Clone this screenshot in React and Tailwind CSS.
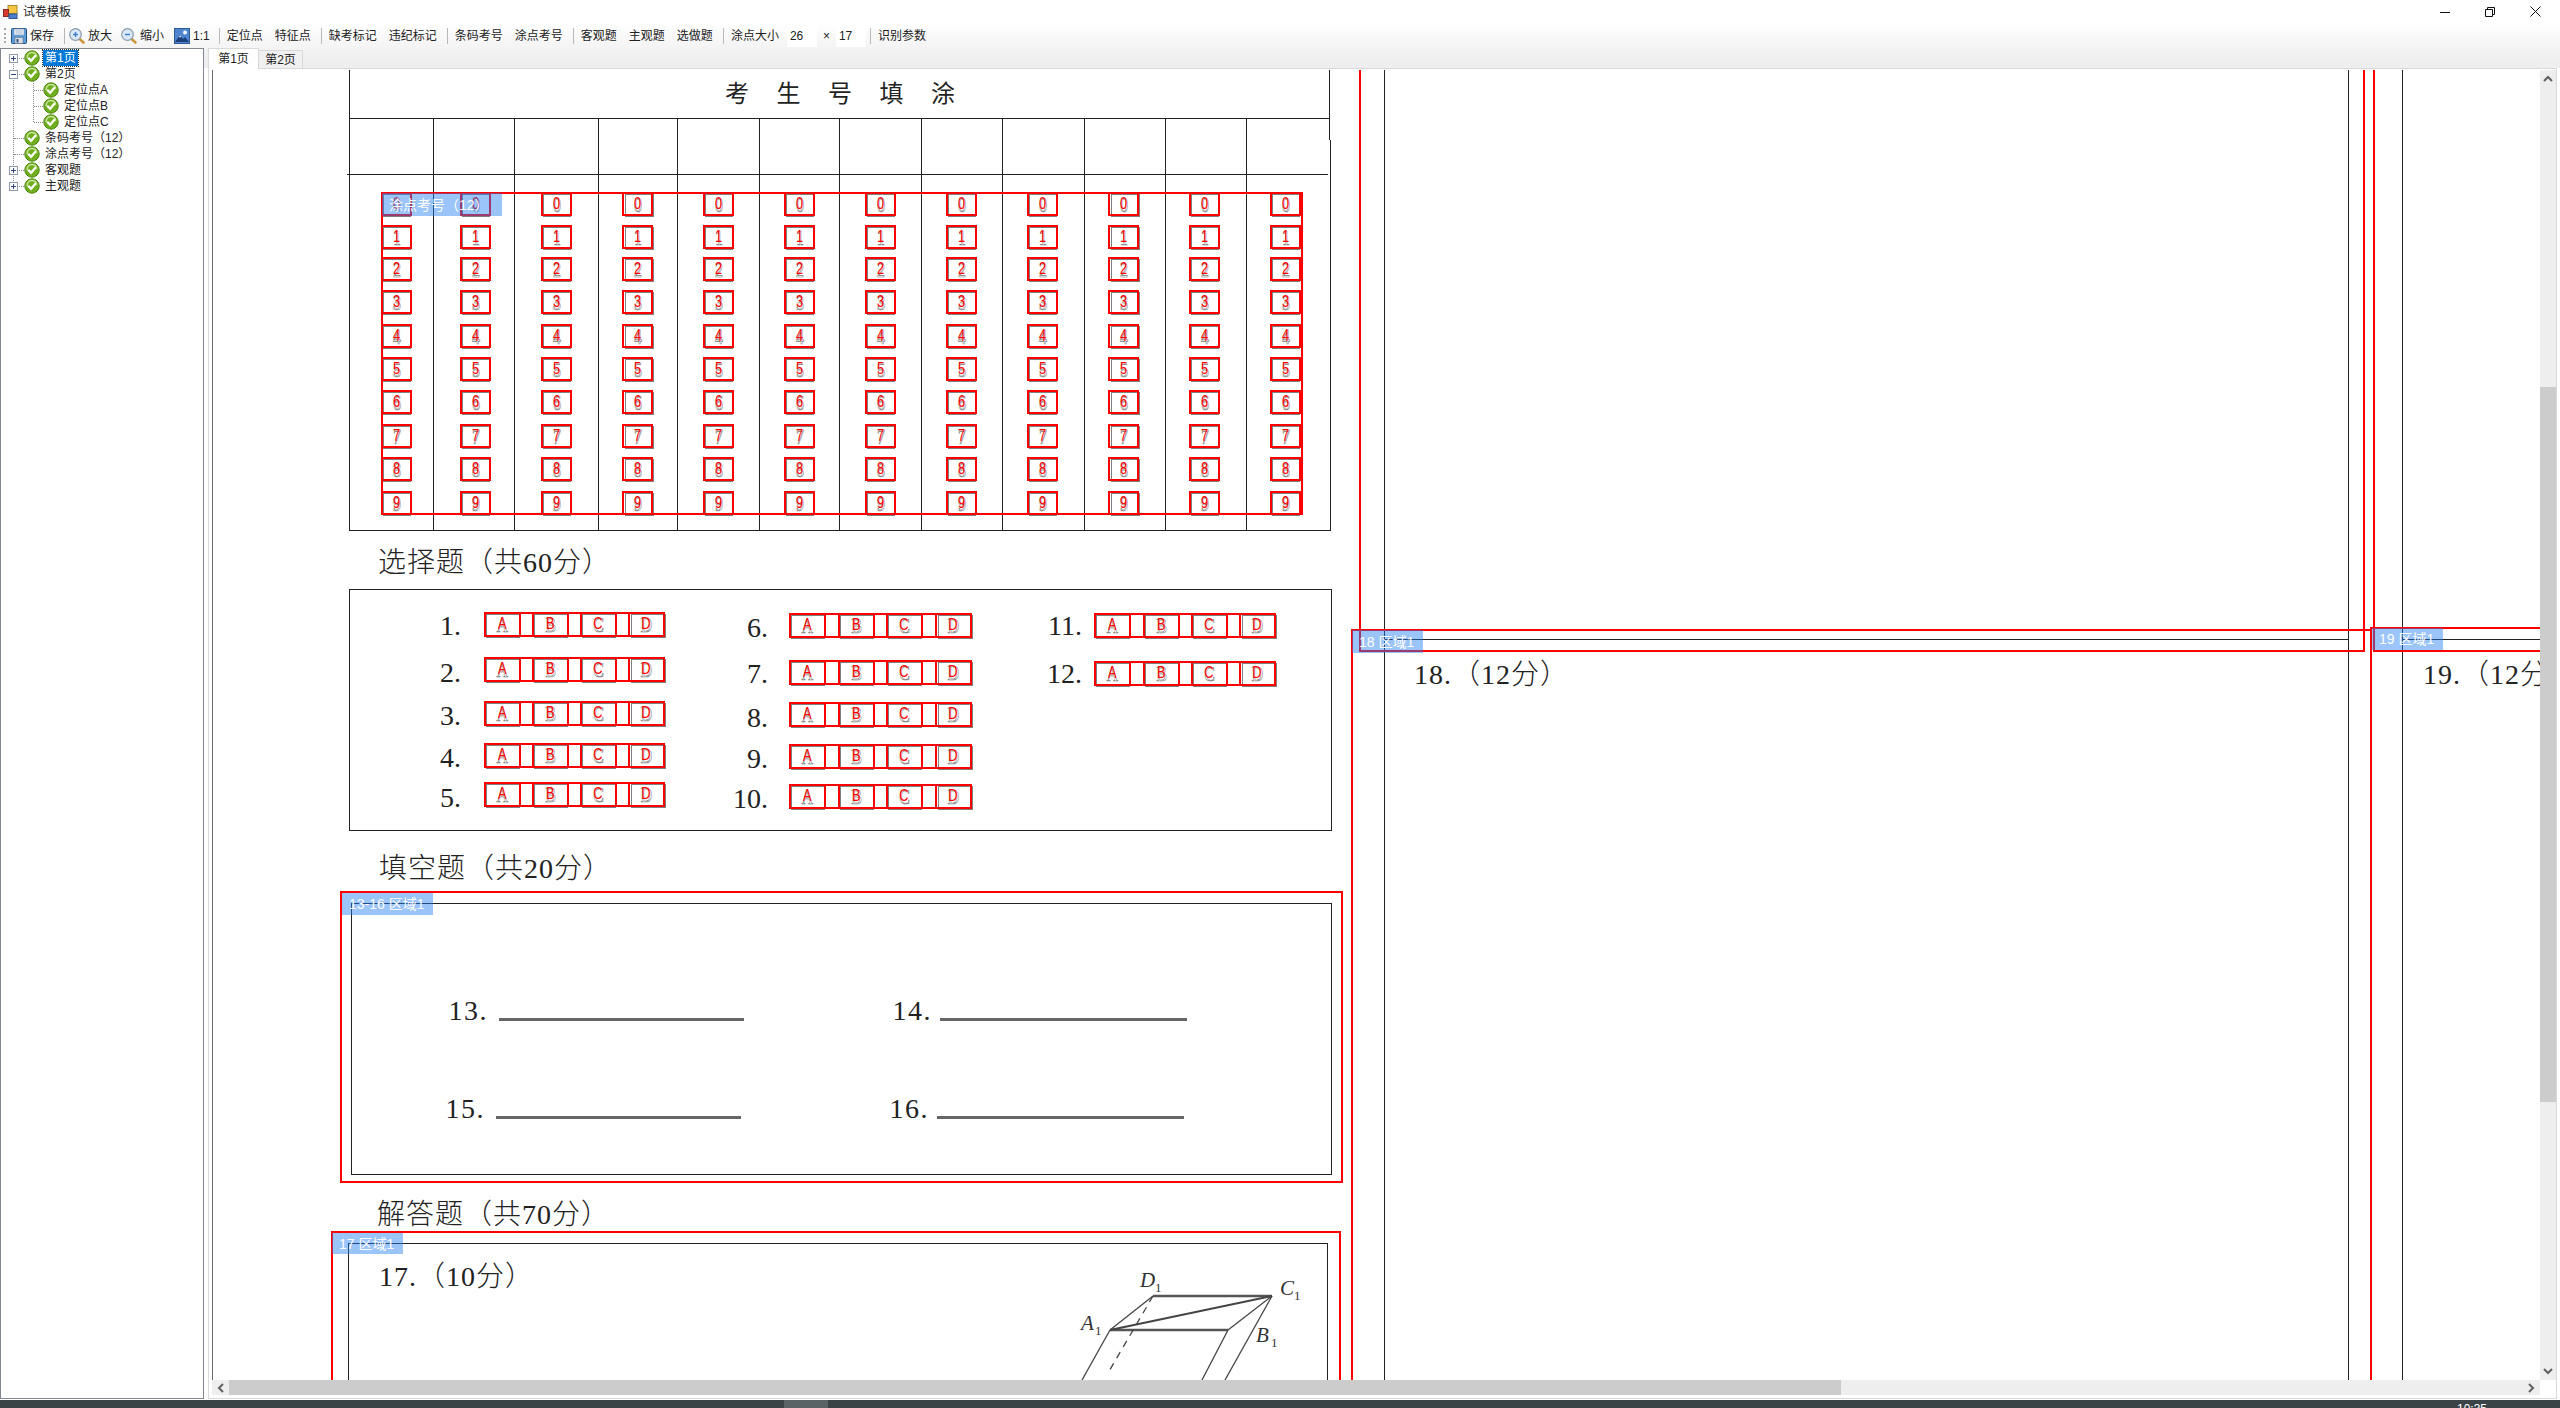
import React from 'react';

// page coords -> canvas coords
const OX = 213;
const OY = 70;

const pos = (x, y, w, h) => ({ left: x - OX, top: y - OY, width: w, height: h });

const Ln = ({ x, y, w = 1, h = 1 }) => (
  <div className="absolute bg-[#222222]" style={pos(x, y, w, h)} />
);
const RedLn = ({ x, y, w = 2, h = 2 }) => (
  <div className="absolute bg-[#ff0000]" style={pos(x, y, w, h)} />
);
const RedRect = ({ x, y, w, h }) => (
  <div className="absolute border-2 border-[#ff0000]" style={pos(x, y, w, h)} />
);
const Rect = ({ x, y, w, h }) => (
  <div className="absolute border border-[#222222]" style={pos(x, y, w, h)} />
);

const SERIF = "font-['Liberation_Serif','Noto_Sans_CJK_SC',serif]";

const Txt = ({ x, y, children }) => (
  <div
    className={`absolute whitespace-nowrap text-[28px] leading-none font-light tracking-[1px] text-[#222222] ${SERIF}`}
    style={{ left: x - OX, top: y - OY }}
  >
    {children}
  </div>
);

const Num = ({ right, base, wide, children }) => (
  <div
    className={`absolute whitespace-nowrap text-right text-[28px] leading-none text-[#222222] ${wide ? 'tracking-[1.5px]' : ''} ${SERIF}`}
    style={{ left: right - 60 - OX, top: base - 23 - OY, width: 60 }}
  >
    {children}
  </div>
);

const Label = ({ x, y, w, h, children }) => (
  <div
    className="absolute z-10 flex items-center whitespace-nowrap bg-[rgba(37,126,243,0.46)] pl-[7px] text-[14px] leading-none text-white font-['Liberation_Sans','Noto_Sans_CJK_SC',sans-serif]"
    style={pos(x, y, w, h)}
  >
    {children}
  </div>
);

// a printed bubble: grey scan outline + glyph, red template box + glyph on top
const Bubble = ({ x, y, w, h, ch, off = 0 }) => (
  <div className="absolute" style={pos(x, y, w, h)}>
    <div
      className="absolute border border-[#808080]"
      style={{ left: 2 + off, top: 2, right: off ? -1 : 1, bottom: -1 }}
    />
    <div className="absolute inset-0 border-2 border-[#ff0000]" />
    <div className="absolute inset-0 flex items-center justify-center pt-[1px] font-['Liberation_Serif',serif] text-[20px] leading-none text-transparent [-webkit-text-stroke:0.6px_#777777]">
      <span className="scale-x-[0.8]">{ch}</span>
    </div>
    <div className="absolute inset-0 flex items-center justify-center pr-[1px] pb-[1px] font-['Liberation_Sans',sans-serif] text-[16px] leading-none text-[#ff0000]">
      <span className="scale-x-[0.8]">{ch}</span>
    </div>
  </div>
);

const COLS = [381, 460, 541, 622, 703, 784, 865, 946, 1027, 1108, 1189, 1270];
const ROWS = [192, 225, 257, 290, 324, 357, 390, 424, 457, 491];
const V_LINES = [433, 514, 598, 677, 759, 839, 921, 1002, 1084, 1165, 1246];

const ChoiceRow = ({ xs, y }) => (
  <>
    <RedRect x={xs[0]} y={y} w={xs[3] + 37 - xs[0]} h={25} />
    {xs.map((x, i) => (
      <Bubble key={i} x={x} y={y} w={37} h={25} ch={'ABCD'[i]} off={i === 3 ? 1 : 0} />
    ))}
  </>
);

const CHOICE1 = [484, 532, 580, 628];
const CHOICE2 = [789, 838, 886, 935];
const CHOICE3 = [1094, 1143, 1191, 1239];

const Sheet = () => (
  <>
    {/* 考生号填涂 */}
    <Ln x={349} y={70} h={460} />
    <Ln x={1329} y={70} h={70} />
    <Ln x={1330} y={140} h={390} />
    <Ln x={349} y={118} w={981} />
    <Ln x={347} y={174} w={981} />
    <Ln x={349} y={530} w={982} />
    {V_LINES.map((x) => (
      <Ln key={x} x={x} y={118} h={412} />
    ))}
    <div
      className="absolute whitespace-nowrap text-[24px] leading-none tracking-[27.5px] text-[#222222] font-['Noto_Sans_CJK_SC',sans-serif]"
      style={{ left: 725 - OX, top: 80 - OY }}
    >
      考生号填涂
    </div>

    {COLS.map((x, c) =>
      ROWS.map((y, r) => <Bubble key={c + '-' + r} x={x} y={y} w={31} h={24} ch={String(r)} off={c === 3 || c === 9 ? 1 : 0} />)
    )}
    <RedRect x={381} y={192} w={922} h={323} />
    <Label x={382} y={193} w={120} h={23}>涂点考号（12）</Label>

    {/* 选择题 */}
    <Txt x={378} y={549}>选择题（共60分）</Txt>
    <Rect x={349} y={589} w={983} h={242} />
    {[612, 657, 701, 743, 782].map((y) => <ChoiceRow key={y} xs={CHOICE1} y={y} />)}
    {[613, 660, 702, 744, 784].map((y) => <ChoiceRow key={y} xs={CHOICE2} y={y} />)}
    {[613, 661].map((y) => <ChoiceRow key={y} xs={CHOICE3} y={y} />)}
    {[635, 682, 725, 767, 807].map((b, i) => <Num key={b} right={461} base={b}>{i + 1}.</Num>)}
    {[637, 683, 727, 768, 808].map((b, i) => <Num key={b} right={768} base={b}>{i + 6}.</Num>)}
    <Num right={1082} base={635}>11.</Num>
    <Num right={1082} base={683}>12.</Num>

    {/* 填空题 */}
    <Txt x={379} y={855}>填空题（共20分）</Txt>
    <RedRect x={340} y={891} w={1003} h={292} />
    <Rect x={351} y={903} w={981} h={272} />
    <Label x={342} y={893} w={91} h={22}>13-16 区域1</Label>
    <Num wide right={488} base={1020}>13.</Num>
    <Num wide right={485} base={1118}>15.</Num>
    <Num wide right={932} base={1020}>14.</Num>
    <Num wide right={929} base={1118}>16.</Num>
    <div className="absolute bg-[#666666]" style={pos(499, 1018, 245, 3)} />
    <div className="absolute bg-[#666666]" style={pos(940, 1018, 247, 3)} />
    <div className="absolute bg-[#666666]" style={pos(496, 1116, 245, 3)} />
    <div className="absolute bg-[#666666]" style={pos(937, 1116, 247, 3)} />

    {/* 解答题 17 */}
    <Txt x={377} y={1201}>解答题（共70分）</Txt>
    <RedLn x={331} y={1231} w={1009} />
    <RedLn x={331} y={1231} h={150} />
    <RedLn x={1339} y={1231} h={150} />
    <Ln x={348} y={1243} w={979} />
    <Ln x={348} y={1243} h={137} />
    <Ln x={1327} y={1243} h={137} />
    <Label x={332} y={1233} w={71} h={21}>17 区域1</Label>
    <Txt x={379} y={1263}>17.（10分）</Txt>
    <svg className="absolute" style={pos(1060, 1260, 260, 120)} viewBox="1060 1260 260 120">
      <g stroke="#444444" fill="none" strokeWidth="1.3">
        <path d="M1153 1296H1272" strokeWidth="2.4" stroke="#555555" />
        <path d="M1110 1330H1228" strokeWidth="2.4" stroke="#555555" />
        <path d="M1110 1330L1272 1296" strokeWidth="2" />
        <path d="M1110 1330L1153 1296" />
        <path d="M1228 1330L1272 1296" />
        <path d="M1110 1330L1082 1380" />
        <path d="M1228 1330L1202 1380" />
        <path d="M1272 1296L1225 1380" />
        <path d="M1153 1296L1108 1373" strokeDasharray="7 6" />
      </g>
      <g fill="#333333" fontFamily="Liberation Serif" fontSize="21" fontStyle="italic">
        <text x="1140" y="1287">D</text>
        <text x="1280" y="1295">C</text>
        <text x="1081" y="1330">A</text>
        <text x="1256" y="1342">B</text>
      </g>
      <g fill="#333333" fontFamily="Liberation Serif" fontSize="13">
        <text x="1155" y="1292">1</text>
        <text x="1294" y="1300">1</text>
        <text x="1095" y="1335">1</text>
        <text x="1271" y="1347">1</text>
      </g>
    </svg>

    {/* 右边两栏 */}
    <Ln x={1384} y={70} h={1310} />
    <Ln x={2348} y={70} h={1310} />
    <Ln x={2402} y={70} h={1310} />
    <Ln x={1384} y={639} w={964} />
    <Ln x={2402} y={639} w={140} />
    <RedLn x={1359} y={70} h={582} />
    <RedLn x={1359} y={650} w={1006} />
    <RedLn x={2363} y={70} h={582} />
    <RedLn x={1351} y={629} w={1021} />
    <RedLn x={1351} y={629} h={751} />
    <RedLn x={2370} y={627} w={172} />
    <RedLn x={2370} y={627} h={753} />
    <RedLn x={2373} y={70} h={582} />
    <RedLn x={2373} y={650} w={169} />
    <Label x={1352} y={630} w={71} h={23}>18 区域1</Label>
    <Label x={2372} y={628} w={71} h={22}>19 区域1</Label>
    <Txt x={1414} y={661}>18.（12分）</Txt>
    <Txt x={2423} y={661}>19.（12分）</Txt>
  </>
);

const CheckIcon = () => (
  <svg width="16" height="16" viewBox="0 0 16 16" className="shrink-0">
    <circle cx="8" cy="8" r="7.2" fill="#6fae1c" stroke="#4a860c" />
    <path d="M3.2 8A4.8 4.8 0 0 1 12.8 6.6" fill="none" stroke="#c8e69a" strokeWidth="1.4" />
    <path d="M4.2 7.8l2.9 3 4.8-5.6" fill="none" stroke="#ffffff" strokeWidth="2.3" />
  </svg>
);

const Expander = ({ open, y }) => (
  <div
    className="absolute z-10 flex h-[9px] w-[9px] items-center justify-center border border-[#8f9aa8] bg-white"
    style={{ left: 8, top: y }}
  >
    <div className="absolute h-px w-[5px] bg-[#2f4a7a]" />
    {!open && <div className="absolute h-[5px] w-px bg-[#2f4a7a]" />}
  </div>
);

const TreeRow = ({ level = 0, selected, children }) => (
  <div className={`flex h-4 items-center ${level ? 'pl-[42px]' : 'pl-[23px]'}`}>
    <div className="flex w-[19px] items-center">
      <CheckIcon />
    </div>
    <span
      className={`whitespace-nowrap px-[2px] text-[12px] leading-4 ${
        selected ? 'bg-[#0078d7] text-white outline-1 outline-dotted outline-[#333333]' : 'text-[#222222]'
      }`}
    >
      {children}
    </span>
  </div>
);

const Tree = () => (
  <div className="relative h-full w-[204px] shrink-0 border border-[#828790] bg-white pt-[1px] font-['Liberation_Sans','Noto_Sans_CJK_SC',sans-serif]">
    {/* dotted guides */}
    <div className="absolute left-[12px] top-[9px] h-[129px] border-l border-dotted border-[#888888]" />
    <div className="absolute left-[32px] top-[32px] h-[41px] border-l border-dotted border-[#888888]" />
    {[9, 25, 89, 105, 121, 137].map((y) => (
      <div key={y} className="absolute left-[13px] w-[12px] border-t border-dotted border-[#888888]" style={{ top: y }} />
    ))}
    {[41, 57, 73].map((y) => (
      <div key={y} className="absolute left-[33px] w-[11px] border-t border-dotted border-[#888888]" style={{ top: y }} />
    ))}
    <Expander y={5} />
    <Expander y={21} open />
    <Expander y={117} />
    <Expander y={133} />
    <TreeRow selected>第1页</TreeRow>
    <TreeRow>第2页</TreeRow>
    <TreeRow level={1}>定位点A</TreeRow>
    <TreeRow level={1}>定位点B</TreeRow>
    <TreeRow level={1}>定位点C</TreeRow>
    <TreeRow>条码考号（12）</TreeRow>
    <TreeRow>涂点考号（12）</TreeRow>
    <TreeRow>客观题</TreeRow>
    <TreeRow>主观题</TreeRow>
  </div>
);

const Sep = () => <div className="ml-[4px] mr-[1px] h-[16px] w-px bg-[#b8b8b8]" />;
const Btn = ({ children }) => <div className="whitespace-nowrap px-[6px]">{children}</div>;

const SaveIcon = () => (
  <svg width="16" height="16" viewBox="0 0 16 16">
    <rect x="0.5" y="0.5" width="15" height="15" rx="1" fill="#5b9bd8" stroke="#23507f" />
    <rect x="3" y="1" width="10" height="6" fill="#eef4fa" stroke="#7d98b4" strokeWidth="0.6" />
    <path d="M4.5 3h7M4.5 5h7" stroke="#9fb4c8" />
    <rect x="4" y="9.5" width="8" height="6" fill="#d8dee4" stroke="#5f7387" strokeWidth="0.6" />
    <rect x="5.5" y="11" width="2" height="3.5" fill="#30567c" />
  </svg>
);

const ZoomIcon = ({ plus }) => (
  <svg width="16" height="16" viewBox="0 0 16 16">
    <path d="M10 10.5l4.5 4" stroke="#c9973a" strokeWidth="2.6" strokeLinecap="round" />
    <circle cx="6.5" cy="6.5" r="5.8" fill="#d9e8f6" stroke="#8a9bab" strokeWidth="1.2" />
    <path d="M4 6.5h5" stroke="#3d7cc4" strokeWidth="1.4" />
    {plus && <path d="M6.5 4v5" stroke="#3d7cc4" strokeWidth="1.4" />}
  </svg>
);

const PictureIcon = () => (
  <svg width="16" height="16" viewBox="0 0 16 16">
    <rect x="0.5" y="0.5" width="15" height="15" fill="#4f86cf" stroke="#2e5a94" />
    <circle cx="11" cy="4.5" r="2" fill="#f3f6fb" />
    <path d="M1 14l5-7 3 4 2-2 4 5z" fill="#1c3f7a" />
    <path d="M6 7l1.4 2-2.4.6z" fill="#e8eef8" />
  </svg>
);

const Toolbar = () => (
  <div className="flex h-[25px] items-center text-[12px] text-[#222222] font-['Liberation_Sans','Noto_Sans_CJK_SC',sans-serif]">
    <div className="ml-[4px] mr-[5px] h-[15px] border-l-2 border-dotted border-[#aaaaaa]" />
    <div className="flex items-center gap-[3px]"><SaveIcon /><span>保存</span></div>
    <div className="ml-[10px] mr-[4px] h-[16px] w-px bg-[#b8b8b8]" />
    <div className="flex items-center gap-[3px]"><ZoomIcon plus /><span>放大</span></div>
    <div className="ml-[9px] flex items-center gap-[3px]"><ZoomIcon /><span>缩小</span></div>
    <div className="ml-[10px] flex items-center gap-[3px]"><PictureIcon /><span>1:1</span></div>
    <div className="ml-[9px] mr-[1px] h-[16px] w-px bg-[#b8b8b8]" />
    <Btn>定位点</Btn>
    <Btn>特征点</Btn>
    <Sep />
    <Btn>缺考标记</Btn>
    <Btn>违纪标记</Btn>
    <Sep />
    <Btn>条码考号</Btn>
    <Btn>涂点考号</Btn>
    <Sep />
    <Btn>客观题</Btn>
    <Btn>主观题</Btn>
    <Btn>选做题</Btn>
    <Sep />
    <Btn>涂点大小</Btn>
    <div className="ml-[2px] flex h-[23px] w-[30px] items-center bg-white pl-[3px]">26</div>
    <div className="mx-[5px] w-[9px] text-center">×</div>
    <div className="flex h-[23px] w-[30px] items-center bg-white pl-[3px]">17</div>
    <Sep />
    <Btn>识别参数</Btn>
  </div>
);

const Arrow = ({ d, className = '' }) => (
  <svg width="10" height="10" viewBox="0 0 10 10" className={className}>
    <path d={d} fill="none" stroke="#606060" strokeWidth="2" />
  </svg>
);

export default function App() {
  return (
    <div className="flex h-[1408px] w-[2560px] flex-col overflow-hidden bg-white [text-spacing-trim:space-all] font-['Liberation_Sans','Noto_Sans_CJK_SC',sans-serif]">
      {/* title bar */}
      <div className="relative flex h-[23px] shrink-0 items-center bg-white pl-[3px]">
        <svg width="15" height="14" viewBox="0 0 15 14">
          <rect x="5" y="0.5" width="9" height="8" fill="#f5c542" stroke="#a88a2a" />
          <rect x="0.5" y="4.5" width="5" height="7" fill="#d9382e" stroke="#8a2a24" />
          <rect x="6" y="9" width="8" height="4.5" fill="#4a7fd0" stroke="#34588f" />
        </svg>
        <span className="ml-[5px] text-[12px] text-[#222222]">试卷模板</span>
        <div className="ml-auto mr-[19px] flex items-center gap-[35px]">
          <svg width="10" height="10" viewBox="0 0 10 10"><path d="M0 5.5h10" stroke="#111111" /></svg>
          <svg width="10" height="10" viewBox="0 0 10 10" className="mx-[0px]">
            <path d="M.5 2.5h7v7h-7zM2.5 2.5v-2h7v7h-2" fill="none" stroke="#111111" />
          </svg>
          <svg width="11" height="11" viewBox="0 0 11 11"><path d="M.5.5l10 10M10.5.5l-10 10" stroke="#111111" /></svg>
        </div>
      </div>

      {/* toolbar + tabs share one gradient */}
      <div className="flex min-h-0 flex-1 flex-col bg-[linear-gradient(#ffffff_0,#eeeeee_37px,#eeeeee_45px,#ffffff_45px)]">
        <Toolbar />
        <div className="flex h-[1351px]">
          <Tree />
          <div className="ml-[4px] flex w-[2349px] flex-col">
            {/* tabs */}
            <div className="relative flex h-[21px] shrink-0 items-end border-b border-[#d9d9d9] text-[12px] text-[#222222]">
              <div className="relative top-px flex h-[21px] w-[51px] items-center justify-center border border-b-0 border-[#d9d9d9] bg-white">第1页</div>
              <div className="flex h-[18px] w-[44px] items-center justify-center border border-l-0 border-b-0 border-[#d9d9d9] bg-[#f0f0f0]">第2页</div>
            </div>
            {/* tab page */}
            <div className="flex min-h-0 flex-1 flex-col border-x border-b border-[#d9d9d9] bg-white pl-[3px] pt-[1px]">
              <div className="flex h-[1310px]">
                <div className="relative w-[2328px] overflow-hidden border-l border-[#696969] bg-white">
                  <Sheet />
                </div>
                {/* vertical scrollbar */}
                <div className="flex w-[16px] flex-col bg-[#eeeeee]">
                  <div className="flex h-[317px] justify-center pt-[4px]">
                    <Arrow d="M1 7l4-4 4 4" />
                  </div>
                  <div className="h-[715px] bg-[#cccccc]" />
                  <div className="flex flex-1 items-end justify-center pb-[4px]">
                    <Arrow d="M1 3l4 4 4-4" />
                  </div>
                </div>
              </div>
              {/* horizontal scrollbar */}
              <div className="flex h-[15px] w-[2328px] bg-[#eeeeee]">
                <div className="flex w-[17px] items-center justify-center">
                  <Arrow d="M7 1L3 5l4 4" />
                </div>
                <div className="w-[1612px] bg-[#cccccc]" />
                <div className="flex flex-1 items-center justify-end pr-[4px]">
                  <Arrow d="M3 1l4 4-4 4" />
                </div>
              </div>
            </div>
          </div>
        </div>
      </div>

      {/* taskbar, only its top edge is on screen */}
      <div className="flex h-[8px] shrink-0 overflow-hidden bg-[#3b4347]">
        <div className="ml-[784px] h-full w-[44px] bg-[#5c6367]" />
        <div className="ml-[1629px] pt-[3px] text-[12px] leading-none text-white">10:35</div>
      </div>
    </div>
  );
}
